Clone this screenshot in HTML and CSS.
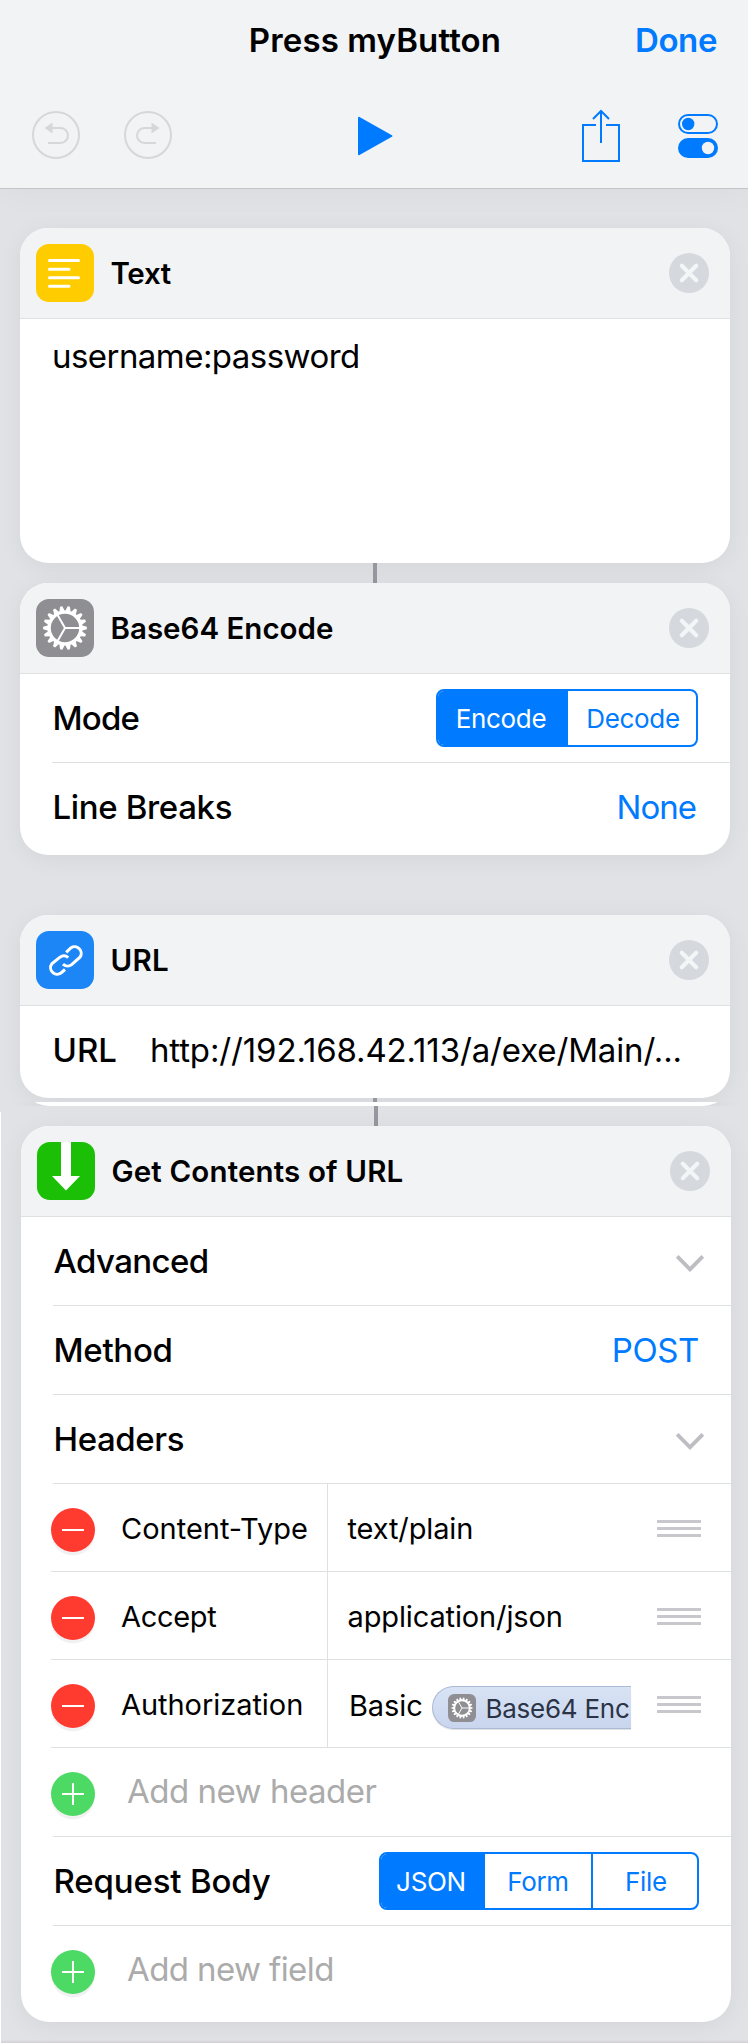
FILE: index.html
```html
<!DOCTYPE html>
<html lang="en">
<head>
<meta charset="utf-8">
<title>Press myButton</title>
<link rel="stylesheet" href="styles.css">
</head>
<body>
<svg class="defs" width="0" height="0" aria-hidden="true">
  <symbol id="close" viewBox="0 0 40 40">
    <circle cx="20" cy="20" r="20" fill="#d5d8dd"/>
    <path d="M12.8 12.8 27.2 27.2M27.2 12.8 12.8 27.2" stroke="#f4f5f7" stroke-width="4.2" stroke-linecap="round"/>
  </symbol>
  <symbol id="gear" viewBox="0 0 58 58">
    <g fill="#fff">
      <g id="teeth6">
        <g id="teeth3">
          <path id="tooth" d="M45.5 26.2 50.9 27.8V30.2L45.5 31.8Z"/>
          <use href="#tooth" transform="rotate(20 29 29)"/>
          <use href="#tooth" transform="rotate(40 29 29)"/>
        </g>
        <use href="#teeth3" transform="rotate(60 29 29)"/>
      </g>
      <use href="#teeth6" transform="rotate(120 29 29)"/>
      <use href="#teeth6" transform="rotate(240 29 29)"/>
    </g>
    <g fill="none" stroke="#fff">
      <circle cx="29" cy="29" r="15.9" stroke-width="3.4"/>
      <path d="M29 29H45M29 29 21 15.1M29 29 21 42.9" stroke-width="2"/>
    </g>
  </symbol>
  <symbol id="chevron" viewBox="0 0 30 20">
    <path d="M2.2 2.4 15 15.4 27.8 2.4" fill="none" stroke="#bdbdc2" stroke-width="3.8"/>
  </symbol>
  <symbol id="grip" viewBox="0 0 44 17">
    <path d="M0 0H44V3H0ZM0 7H44V10H0ZM0 14H44V17H0Z" fill="#c7c7cc"/>
  </symbol>
</svg>

<div class="sheet sheet-top">
  <header class="topbar">
    <div class="nav">
      <h1 class="nav-title"><span>Press myButton</span></h1>
      <a class="done">Done</a>
    </div>
    <div class="toolbar">
      <svg class="undo" width="48" height="48" viewBox="0 0 48 48" fill="none" stroke="#d6d7d9" stroke-width="2">
        <circle cx="24" cy="24" r="23"/>
        <path d="M16 32H28.5A7.5 7.5 0 0 0 28.5 17H20"/>
        <path d="M12.5 17 20.5 11.5V22.5Z" fill="#d6d7d9" stroke="none"/>
      </svg>
      <svg class="redo" width="48" height="48" viewBox="0 0 48 48" fill="none" stroke="#d6d7d9" stroke-width="2">
        <circle cx="24" cy="24" r="23"/>
        <path d="M32 32H20.5A7.5 7.5 0 0 1 20.5 17H28"/>
        <path d="M35.5 17 27.5 11.5V22.5Z" fill="#d6d7d9" stroke="none"/>
      </svg>
      <svg class="play" width="36" height="40" viewBox="0 0 36 40">
        <path d="M1 1.8 33.4 20 1 38.2Z" fill="#007aff" stroke="#007aff" stroke-width="2" stroke-linejoin="round"/>
      </svg>
      <svg class="share" width="38" height="54" viewBox="0 0 38 54" fill="none" stroke="#007aff" stroke-width="2">
        <path d="M14 16H1V52H37V16H24M19 34V2M11 10 19 2 27 10"/>
      </svg>
      <svg class="toggles" width="40" height="46" viewBox="0 0 40 46">
        <rect x="1" y="2" width="38" height="18" rx="9" fill="none" stroke="#007aff" stroke-width="2"/>
        <circle cx="10.2" cy="11" r="6.2" fill="#007aff"/>
        <rect y="25" width="40" height="20" rx="10" fill="#007aff"/>
        <circle cx="30" cy="35" r="6.2" fill="#f2f3f5"/>
      </svg>
    </div>
  </header>

  <article class="card card-text">
    <header class="card-head">
      <svg class="icon" viewBox="0 0 58 58">
        <rect width="58" height="58" rx="13" fill="#ffcc00"/>
        <path d="M13.5 16.5H42.5M13.5 25.2H33M13.5 33.8H42.5M13.5 42.3H33" stroke="#fff" stroke-width="3" stroke-linecap="round"/>
      </svg>
      <h2 class="t-text">Text</h2>
      <svg class="close"><use href="#close"/></svg>
    </header>
    <p class="text-body"><span class="t-cred">username:password</span></p>
  </article>

  <div class="link"></div>

  <article class="card card-encode">
    <header class="card-head">
      <svg class="icon" viewBox="0 0 58 58">
        <rect width="58" height="58" rx="13" fill="#8e8e93"/>
        <use href="#gear" width="58" height="58"/>
      </svg>
      <h2 class="t-b64">Base64 Encode</h2>
      <svg class="close"><use href="#close"/></svg>
    </header>
    <div class="row">
      <span class="label t-mode">Mode</span>
      <div class="segment segment-two">
        <span class="seg on t-encode">Encode</span>
        <span class="seg t-decode">Decode</span>
      </div>
    </div>
    <div class="row">
      <span class="label t-line">Line Breaks</span>
      <span class="value t-none">None</span>
    </div>
  </article>

  <article class="card card-url">
    <header class="card-head">
      <svg class="icon" viewBox="0 0 58 58">
        <rect width="58" height="58" rx="13" fill="#1c86f7"/>
        <g fill="none" stroke="#fff" stroke-width="3">
          <path d="M30.2 21.3 34.8 17A6.6 6.6 0 0 1 44 26.2L35.6 33.6A6.6 6.6 0 0 1 27 33.2"/>
          <path d="M29 38.5 25 42A6.6 6.6 0 0 1 15.8 32.8L24 26.2A6.6 6.6 0 0 1 32.2 26.6"/>
        </g>
      </svg>
      <h2 class="t-urlhead">URL</h2>
      <svg class="close"><use href="#close"/></svg>
    </header>
    <div class="row url-row">
      <span class="label t-url">URL</span>
      <span class="t-address">http://192.168.42.113/a/exe/Main/...</span>
    </div>
  </article>
  <div class="link"></div>
</div>

<div class="sheet sheet-bottom">
  <div class="tail"><div class="card"></div></div>
  <div class="link"></div>

  <article class="card card-get">
    <header class="card-head">
      <svg class="icon" viewBox="0 0 58 58">
        <rect width="58" height="58" rx="13" fill="#1bbf05"/>
        <path d="M24 0H34V34H43L29 48.5 15 34H24Z" fill="#fff"/>
      </svg>
      <h2 class="t-get">Get Contents of URL</h2>
      <svg class="close"><use href="#close"/></svg>
    </header>
    <div class="row">
      <span class="label t-adv">Advanced</span>
      <svg class="chevron"><use href="#chevron"/></svg>
    </div>
    <div class="row">
      <span class="label t-method">Method</span>
      <span class="value t-post">POST</span>
    </div>
    <div class="row">
      <span class="label t-headers">Headers</span>
      <svg class="chevron"><use href="#chevron"/></svg>
    </div>
    <div class="pair">
      <span class="dot minus"></span>
      <span class="key"><span class="t-ctype">Content-Type</span></span>
      <span class="val"><span class="t-plain">text/plain</span></span>
      <svg class="grip"><use href="#grip"/></svg>
    </div>
    <div class="pair">
      <span class="dot minus"></span>
      <span class="key"><span class="t-accept">Accept</span></span>
      <span class="val"><span class="t-json">application/json</span></span>
      <svg class="grip"><use href="#grip"/></svg>
    </div>
    <div class="pair">
      <span class="dot minus"></span>
      <span class="key"><span class="t-auth">Authorization</span></span>
      <span class="val val-token"><span class="t-basic">Basic</span>
        <span class="token">
          <svg class="token-icon" viewBox="0 0 58 58">
            <rect width="58" height="58" rx="13" fill="#8e8e93"/>
            <use href="#gear" width="58" height="58"/>
          </svg>
          <span class="t-token">Base64 Enc</span>
        </span>
      </span>
      <svg class="grip"><use href="#grip"/></svg>
    </div>
    <div class="add">
      <span class="dot plus"></span>
      <span class="hint t-addh">Add new header</span>
    </div>
    <div class="row">
      <span class="label t-body">Request Body</span>
      <div class="segment segment-three">
        <span class="seg on t-sjson">JSON</span>
        <span class="seg t-form">Form</span>
        <span class="seg t-file">File</span>
      </div>
    </div>
    <div class="add add-last">
      <span class="dot plus"></span>
      <span class="hint t-addf">Add new field</span>
    </div>
  </article>
</div>
</body>
</html>
```

FILE: styles.css
```css
* {
  box-sizing: border-box;
}

body {
  margin: 0;
  width: 748px;
  background: #e1e2e6;
  color: #000;
  font-family: Inter, "Liberation Sans", sans-serif;
  font-size: 33px;
  white-space: nowrap;
}

h1,
h2,
p {
  margin: 0;
}

svg {
  display: block;
  flex: none;
}

.defs {
  position: absolute;
}

.sheet {
  display: flex;
  flex-direction: column;
  overflow: hidden;
}

.sheet-top {
  height: 1102px;
}

.sheet-bottom {
  height: 941px;
  padding-left: 1px;
  background:
    linear-gradient(#fff, #fff) no-repeat 0 10px / 1px 100%,
    linear-gradient(rgba(200, 200, 206, 0), #cfcfd4) no-repeat 0 100% / 100% 3px;
}

/* Top bar */
.topbar {
  height: 189px;
  flex: none;
  background: #f2f3f5;
  border-bottom: 1px solid #c4c5c9;
  box-shadow: 0 0 34px rgba(0, 0, 0, 0.04);
}

.nav {
  display: grid;
  grid-template-columns: 1fr auto 1fr;
  align-items: center;
  height: 80px;
  padding: 0 31px;
}

.nav-title {
  grid-column: 2;
  padding-left: 2px;
  font-size: 33px;
  font-weight: 600;
  letter-spacing: 0.12px;
}

.done {
  justify-self: end;
  color: #007aff;
  font-size: 33px;
  font-weight: 600;
  letter-spacing: -0.4px;
}

.toolbar {
  display: flex;
  align-items: center;
  height: 108px;
  padding: 2px 30px 0 32px;
}

.redo {
  margin-left: 44px;
}

.play {
  margin: 2px 0 0 186px;
}

.share {
  margin: 1px 0 0 188px;
}

.toggles {
  margin: 2px 0 0 auto;
}

/* Cards */
.card {
  flex: none;
  width: 710px;
  margin-left: 20px;
  border-radius: 28px;
  background: #fff;
  box-shadow: 0 4px 24px rgba(0, 0, 0, 0.055);
}

.card-text {
  height: 335px;
  margin-top: 39px;
}

.card-encode {
  height: 272px;
}

.card-url {
  height: 183px;
  margin-top: 60px;
}

.card-get {
  height: 896px;
}

.card-head {
  display: flex;
  align-items: center;
  height: 91px;
  padding: 0 21px 1px 16px;
  border-bottom: 1px solid #dfe0e2;
  border-radius: 28px 28px 0 0;
  background: #f2f3f5;
}

.card-head h2 {
  margin: 0 0 0 16.5px;
  font-size: 29.5px;
  font-weight: 600;
}

.icon {
  width: 58px;
  height: 58px;
}

.close {
  width: 40px;
  height: 40px;
  margin-left: auto;
}

.link {
  flex: none;
  width: 4px;
  height: 20px;
  margin-left: 373px;
  background: #97989f;
}

.text-body {
  padding: 17px 32px;
  line-height: 41px;
}

/* Rows */
.row {
  display: flex;
  align-items: center;
  justify-content: space-between;
  height: 89px;
  margin-left: 32px;
  padding: 0 32px 0 0.5px;
  border-bottom: 1px solid #dfe0e2;
}

.card-encode .row:last-child,
.card-url .row:last-child {
  border-color: transparent;
}

.label {
  font-weight: 500;
}

.value {
  color: #007aff;
}

.url-row {
  justify-content: flex-start;
}

.t-address {
  margin-left: 33px;
}

.segment {
  display: flex;
  height: 58px;
  border: 2px solid #007aff;
  border-radius: 8px;
  overflow: hidden;
  font-size: 26px;
  letter-spacing: -0.3px;
}

.segment-two {
  width: 262px;
}

.segment-three {
  width: 320px;
}

.seg {
  display: flex;
  flex: 1;
  align-items: center;
  justify-content: center;
  color: #007aff;
}

.seg.on {
  padding-right: 4px;
  background: #007aff;
  color: #fff;
}

.segment-two .on {
  flex: 0 0 130px;
}

.segment-three .on {
  flex: 0 0 104px;
}

.segment .t-decode {
  padding-left: 2px;
}

.segment .t-file {
  flex: 0 0 106px;
  padding-left: 2px;
  border-left: 2px solid #007aff;
}

.chevron {
  width: 30px;
  height: 20px;
  margin: 6px -6px 0 0;
}

/* Header fields */
.pair {
  display: flex;
  align-items: center;
  height: 88px;
  margin-left: 30px;
  padding-right: 30px;
  border-bottom: 1px solid #dfe0e2;
  font-size: 29px;
}

.key {
  display: flex;
  align-items: center;
  align-self: stretch;
  width: 233px;
  padding: 2px 0 0 26px;
  border-right: 1px solid #dfe0e2;
}

.val {
  flex: 1;
  display: flex;
  align-items: center;
  padding: 2px 0 0 19.5px;
}

.val-token {
  padding: 4px 0 0 21px;
}

.dot {
  flex: none;
  width: 44px;
  height: 44px;
  margin-top: 4px;
  border-radius: 50%;
  box-shadow: 0 4px 0 -0.5px #f1f1f2;
}

.minus {
  background: linear-gradient(#fff, #fff) no-repeat 50% 50% / 22px 2px, #ff3b30;
}

.plus {
  background:
    linear-gradient(#fff, #fff) no-repeat 50% 50% / 22px 2px,
    linear-gradient(#fff, #fff) no-repeat 50% 50% / 2px 22px,
    #4cd964;
}

.grip {
  width: 44px;
  height: 17px;
  margin-top: 2px;
}

.token {
  display: flex;
  align-items: center;
  flex: none;
  width: 199px;
  height: 43px;
  margin: 4px 26px 0 auto;
  padding-left: 15px;
  border: 1px solid #a9b9d6;
  border-right: 0;
  border-radius: 22px 0 0 22px;
  background: linear-gradient(#d8e3f4, #c9d5ee);
  box-shadow: 0 1px 1px rgba(0, 0, 0, 0.12);
  color: #2a3446;
  font-size: 26px;
}

.token-icon {
  width: 28px;
  height: 28px;
  margin-right: 9.5px;
}

.t-token {
  padding-top: 2px;
}

.add {
  display: flex;
  align-items: center;
  height: 89px;
  margin-left: 32px;
  border-bottom: 1px solid #dfe0e2;
}

.add .dot {
  margin-left: -2px;
}

.add-last {
  border-color: transparent;
}

.hint {
  margin: -3px 0 0 32px;
  color: #ababab;
}

/* Lower sheet */
.tail {
  flex: none;
  height: 4px;
  overflow: hidden;
  display: flex;
  align-items: flex-end;
}

.tail .card {
  height: 80px;
}

/* Tracking */
.t-cred { letter-spacing: -0.55px; }
.card-head .t-text { letter-spacing: -0.3px; }
.card-head .t-urlhead { letter-spacing: 0.3px; }
.card-head .t-get { letter-spacing: 0.15px; }
.t-mode { letter-spacing: -0.8px; }
.t-line { letter-spacing: -0.35px; }
.t-none { margin-right: 2px; letter-spacing: -1px; }
.t-address { letter-spacing: -0.14px; }
.t-adv { letter-spacing: -0.6px; }
.t-method { letter-spacing: -0.3px; }
.t-post { letter-spacing: -0.4px; }
.t-headers { letter-spacing: -0.4px; }
.t-accept { letter-spacing: -0.3px; }
.t-auth { letter-spacing: -0.05px; }
.t-plain,
.t-json { letter-spacing: -0.13px; }
.t-basic { letter-spacing: -0.1px; }
.t-token { letter-spacing: -0.25px; }
.t-addh { letter-spacing: -0.5px; }
.t-addf { letter-spacing: -0.6px; }
.t-body { letter-spacing: -0.15px; }
```
